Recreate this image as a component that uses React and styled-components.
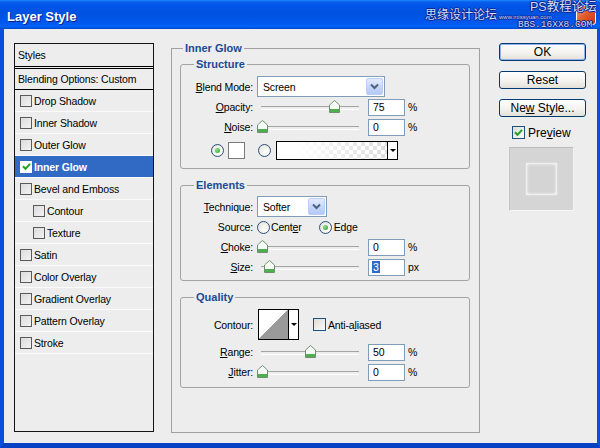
import React from "react";
import styled, { createGlobalStyle } from "styled-components";

const GlobalStyle = createGlobalStyle`
  html, body {
    margin: 0;
    padding: 0;
    background: #fff;
  }
  body {
    font-family: "Liberation Sans", Tahoma, Arial, sans-serif;
    font-size: 10.5px;
    letter-spacing: -0.15px;
    color: #000;
  }
  #root {
    width: 600px;
    height: 448px;
    overflow: hidden;
  }
  * {
    box-sizing: border-box;
  }
`;

const Window = styled.div`
  width: 600px;
  height: 448px;
  display: flex;
  flex-direction: column;
  background: #0a4fdc;
`;

const TitleBar = styled.div`
  position: relative;
  height: 29px;
  flex-shrink: 0;
  display: flex;
  align-items: center;
  padding: 3px 0 0 7px;
  background: linear-gradient(
    to bottom,
    #1a8cff 0,
    #0a5ded 2px,
    #0056e8 6px,
    #0052e0 45%,
    #0058ef 80%,
    #0062f8 92%,
    #0047c9 100%
  );
`;

const Title = styled.span`
  font-family: "Liberation Sans", Arial, sans-serif;
  font-weight: bold;
  font-size: 13px;
  letter-spacing: 0;
  color: #fff;
  text-shadow: 1px 1px 0 #0a1f8e;
`;

const CloseButton = styled.div`
  position: absolute;
  right: 4px;
  top: 5px;
  width: 20px;
  height: 20px;
  border-radius: 3px;
  border: 1px solid #fff;
  background: linear-gradient(135deg, #f0a080, #e2582c 50%, #c63a14);
`;

const Watermark = styled.span`
  position: absolute;
  left: ${(p) => p.$x}px;
  top: ${(p) => p.$y}px;
  font-family: ${(p) => (p.$mono ? '"Liberation Mono", monospace' : '"Liberation Sans", "Noto Sans CJK SC", sans-serif')};
  font-size: ${(p) => p.$size}px;
  letter-spacing: 0;
  line-height: 1;
  color: #d4ddff;
  white-space: nowrap;
  text-shadow: 0 0 1px #001060, 1px 0 0 #0a2a9a, -1px 0 0 #0a2a9a, 0 1px 0 #0a2a9a, 0 -1px 0 #0a2a9a;
`;

const Frame = styled.div`
  flex: 1;
  display: flex;
  align-items: flex-start;
  padding: 13px 0 0 10px;
  background: #ededed;
  border-left: 4px solid #0b4fe0;
  border-right: 3px solid #0b4fe0;
  border-bottom: 5px solid #0841c6;
`;

/* ---------- left style list ---------- */

const StylesPanel = styled.div`
  width: 140px;
  height: 389px;
  margin-top: 1px;
  border: 1px solid #141414;
  background: #ededed;
`;

const PanelHeader = styled.div`
  height: ${(p) => p.$h}px;
  display: flex;
  align-items: center;
  padding-left: 3px;
  border-bottom: ${(p) => (p.$double ? "3px double #000" : "1px solid #000")};
`;

const PanelRow = styled.div`
  height: 22px;
  display: flex;
  align-items: center;
  padding-left: ${(p) => (p.$indent ? 18 : 5)}px;
  border-bottom: 1px solid #fbfbfb;
  background: ${(p) => (p.$selected ? "#316ac5" : "transparent")};
  color: ${(p) => (p.$selected ? "#fff" : "#000")};
  font-weight: ${(p) => (p.$selected ? "bold" : "normal")};
`;

const ListBox = styled.span`
  width: 12px;
  height: 12px;
  margin-right: 2px;
  flex-shrink: 0;
  display: flex;
  align-items: center;
  justify-content: center;
  border: 1px solid ${(p) => (p.$checked ? "#fff" : "#5a5a5a")};
  background: ${(p) => (p.$checked ? "#fff" : "linear-gradient(135deg, #dcdcdc, #f2f2f2)")};
`;

/* ---------- group boxes ---------- */

const MainGroup = styled.fieldset`
  width: 309px;
  height: 391px;
  margin: 0 0 0 17px;
  padding: 0 9px 0 8px;
  border: 1px solid #a0a0a0;
  min-inline-size: auto;
`;

const Group = styled.fieldset`
  margin: ${(p) => p.$mt}px 0 0 0;
  padding: ${(p) => p.$pt}px 0 ${(p) => p.$pb}px 0;
  border: 1px solid #a3a3a3;
  border-radius: 3px;
  min-inline-size: auto;
`;

const Legend = styled.legend`
  margin-left: ${(p) => p.$ml}px;
  padding: 0 2px;
  font-weight: bold;
  font-size: 11px;
  letter-spacing: 0;
  line-height: 13px;
  color: #1b4a92;
`;

const Row = styled.div`
  display: flex;
  align-items: center;
  height: ${(p) => p.$h || 20}px;
  margin-top: ${(p) => p.$mt || 0}px;
  padding-left: ${(p) => p.$pl || 0}px;
`;

const Label = styled.span`
  width: 72px;
  flex-shrink: 0;
  text-align: right;
  white-space: nowrap;
`;

const U = styled.span`
  text-decoration: underline;
`;

const Select = styled.div`
  width: ${(p) => p.$w}px;
  height: 21px;
  margin-left: 4px;
  display: flex;
  align-items: center;
  justify-content: space-between;
  padding: 0 1px 0 5px;
  border: 1px solid #7f9db9;
  background: #fff;
`;

const SelectButton = styled.span`
  width: 17px;
  height: 17px;
  display: flex;
  align-items: center;
  justify-content: center;
  border: 1px solid #bccef8;
  border-radius: 2px;
  background: linear-gradient(to bottom, #e3ebfd, #c3d4f9 60%, #b4c8f6);
`;

const Slider = styled.div`
  position: relative;
  width: 106px;
  height: 14px;
  margin-left: 4px;
  flex-shrink: 0;

  &::before {
    content: "";
    position: absolute;
    left: 4px;
    right: 4px;
    top: 6px;
    height: 2px;
    border-top: 1px solid #a4a4a4;
    border-bottom: 1px solid #fff;
  }
`;

const ThumbWrap = styled.span`
  position: absolute;
  top: 0;
  width: 11px;
  height: 13px;
  display: block;
`;

const NumInput = styled.div`
  width: 37px;
  height: 17px;
  margin-left: 5px;
  display: flex;
  align-items: center;
  padding-left: 4px;
  border: 1px solid #7f9db9;
  background: #fff;
`;

const Highlight = styled.span`
  background: #316ac5;
  color: #fff;
  padding: 0 1px;
  margin-left: -1px;
`;

const Unit = styled.span`
  margin-left: 3px;
`;

const Radio = styled.span`
  width: 13px;
  height: 13px;
  flex-shrink: 0;
  margin-left: ${(p) => p.$ml || 0}px;
  border-radius: 50%;
  border: 1px solid #2a4f7a;
  background: radial-gradient(circle at 65% 65%, #fff, #e6e6e0 80%);
  display: flex;
  align-items: center;
  justify-content: center;

  &::after {
    content: "";
    display: ${(p) => (p.$checked ? "block" : "none")};
    width: 5px;
    height: 5px;
    border-radius: 50%;
    background: radial-gradient(circle at 35% 35%, #8de08d, #21a121);
  }
`;

const RadioText = styled.span`
  margin-left: ${(p) => p.$ml || 1}px;
`;

const Swatch = styled.span`
  width: 17px;
  height: 17px;
  margin-left: 4px;
  border: 1px solid #7a7a7a;
  background: #fff;
`;

const GradientPicker = styled.div`
  width: 122px;
  height: 19px;
  margin-left: 5px;
  display: flex;
  border: 1px solid #000;
`;

const GradientFill = styled.span`
  flex: 1;
  background: linear-gradient(to right, #fff 15%, rgba(255, 255, 255, 0.3) 100%),
    repeating-conic-gradient(#cfcfcf 0 25%, #fff 0 50%) 0 0 / 8px 8px;
`;

const PickerArrow = styled.span`
  width: 10px;
  flex-shrink: 0;
  display: flex;
  align-items: center;
  justify-content: center;
  border-left: 1px solid #000;
  background: #fff;

  &::after {
    content: "";
    border-left: 3px solid transparent;
    border-right: 3px solid transparent;
    border-top: 3px solid #000;
  }
`;

const ContourPicker = styled.div`
  width: 41px;
  height: 31px;
  margin-left: 5px;
  display: flex;
  border: 1px solid #000;
`;

const ContourFill = styled.span`
  flex: 1;
  background: linear-gradient(to bottom right, #fff 50%, #9a9a9a 50%);
`;

const CheckBox = styled.span`
  width: 13px;
  height: 13px;
  flex-shrink: 0;
  margin-left: ${(p) => p.$ml || 0}px;
  display: flex;
  align-items: center;
  justify-content: center;
  border: 1px solid #1c5180;
  background: linear-gradient(135deg, #dcdcd7, #fbfbfb);
`;

/* ---------- right column ---------- */

const RightColumn = styled.div`
  width: 87px;
  margin: 1px 0 0 19px;
  display: flex;
  flex-direction: column;
`;

const Button = styled.div`
  height: 18px;
  margin-bottom: 10px;
  display: flex;
  align-items: center;
  justify-content: center;
  border: 1px solid #003c74;
  border-radius: 3px;
  background: linear-gradient(to bottom, #fff, #f2f1ec 60%, #e3e0d6);
  box-shadow: ${(p) => (p.$default ? "inset 0 0 0 1px #8fb0ea" : "none")};
  font-size: 12px;
  letter-spacing: 0;
`;

const PreviewToggle = styled.div`
  display: flex;
  align-items: center;
  height: 13px;
  margin-top: -1px;
  padding-left: 13px;
  font-size: 12px;
  letter-spacing: 0;
`;

const PreviewBox = styled.div`
  width: 65px;
  height: 64px;
  margin: 8px 0 0 10px;
  display: flex;
  align-items: center;
  justify-content: center;
  background: #d5d5d5;
  border-top: 1px solid #bdbdbd;
  border-left: 1px solid #c4c4c4;
  border-bottom: 1px solid #f6f6f6;
  border-right: 1px solid #f3f3f3;
`;

const PreviewSquare = styled.div`
  width: 31px;
  height: 32px;
  background: #d4d4d4;
  border-radius: 1px;
  box-shadow: inset 0 0 3px 1px rgba(255, 255, 255, 0.95), 0 0 2px rgba(240, 240, 240, 0.9);
`;

/* ---------- drawings ---------- */

function Chevron() {
  return (
    <svg width="9" height="7" viewBox="0 0 9 7">
      <path d="M1 1.5 L4.5 5 L8 1.5" fill="none" stroke="#4d6185" strokeWidth="2" />
    </svg>
  );
}

function Check() {
  return (
    <svg width="9" height="9" viewBox="0 0 9 9">
      <path d="M1 4.2 L3.5 6.8 L8 1.8" fill="none" stroke="#21a121" strokeWidth="2" />
    </svg>
  );
}

function Thumb({ value }) {
  const left = (value / 100) * 96;
  return (
    <ThumbWrap style={{ left: `${left}px` }}>
      <svg width="11" height="13" viewBox="0 0 11 13">
        <path d="M0.5 5 L5.5 0.5 L10.5 5 V12.5 H0.5 Z" fill="#f6fbf6" stroke="#6e8f6e" />
        <rect x="1" y="9" width="9" height="3" fill="#4fae4f" />
        <path d="M1.5 5.3 L5.5 1.7" stroke="#fff" />
      </svg>
    </ThumbWrap>
  );
}

function SliderRow({ label, value, number, unit = "%", mt }) {
  return (
    <Row $mt={mt}>
      <Label>{label}</Label>
      <Slider>
        <Thumb value={value} />
      </Slider>
      <NumInput>{number}</NumInput>
      <Unit>{unit}</Unit>
    </Row>
  );
}

const styleItems = [
  { name: "Drop Shadow" },
  { name: "Inner Shadow" },
  { name: "Outer Glow" },
  { name: "Inner Glow", selected: true },
  { name: "Bevel and Emboss" },
  { name: "Contour", indent: true },
  { name: "Texture", indent: true },
  { name: "Satin" },
  { name: "Color Overlay" },
  { name: "Gradient Overlay" },
  { name: "Pattern Overlay" },
  { name: "Stroke" },
];

export default function App() {
  return (
    <>
      <GlobalStyle />
      <Window>
        <TitleBar>
          <Title>Layer Style</Title>
          <CloseButton />
          <Watermark $x={425} $y={9} $size={12}>思缘设计论坛</Watermark>
          <Watermark $x={499} $y={14} $size={6}>www.missyuan.com</Watermark>
          <Watermark $x={530} $y={1} $size={12.5}>PS教程论坛</Watermark>
          <Watermark $x={518} $y={20} $size={9.5} $mono>BBS.16XX8.COM</Watermark>
        </TitleBar>

        <Frame>
          <StylesPanel>
            <PanelHeader $h={25} $double>Styles</PanelHeader>
            <PanelHeader $h={21}>Blending Options: Custom</PanelHeader>
            {styleItems.map((item) => (
              <PanelRow key={item.name} $indent={item.indent} $selected={item.selected}>
                <ListBox $checked={item.selected}>{item.selected && <Check />}</ListBox>
                {item.name}
              </PanelRow>
            ))}
          </StylesPanel>

          <MainGroup>
            <Legend $ml={3}>Inner Glow</Legend>

            <Group $mt={3} $pt={5} $pb={8}>
              <Legend $ml={13}>Structure</Legend>
              <Row $h={21}>
                <Label>
                  <U>B</U>lend Mode:
                </Label>
                <Select $w={128}>
                  Screen
                  <SelectButton>
                    <Chevron />
                  </SelectButton>
                </Select>
              </Row>
              <SliderRow
                label={<><U>O</U>pacity:</>}
                value={75}
                number="75"
              />
              <SliderRow label={<><U>N</U>oise:</>} value={0} number="0" />
              <Row $mt={3} $pl={30}>
                <Radio $checked />
                <Swatch />
                <Radio $ml={13} />
                <GradientPicker>
                  <GradientFill />
                  <PickerArrow />
                </GradientPicker>
              </Row>
            </Group>

            <Group $mt={10} $pt={4} $pb={3}>
              <Legend $ml={13}>Elements</Legend>
              <Row $h={21}>
                <Label>
                  <U>T</U>echnique:
                </Label>
                <Select $w={70}>
                  Softer
                  <SelectButton>
                    <Chevron />
                  </SelectButton>
                </Select>
              </Row>
              <Row>
                <Label>Source:</Label>
                <Radio $ml={4} />
                <RadioText>
                  Cent<U>e</U>r
                </RadioText>
                <Radio $ml={17} $checked />
                <RadioText $ml={2}>
                  Ed<U>g</U>e
                </RadioText>
              </Row>
              <SliderRow label={<><U>C</U>hoke:</>} value={0} number="0" />
              <SliderRow
                label={<><U>S</U>ize:</>}
                value={7}
                number={<Highlight>3</Highlight>}
                unit="px"
              />
            </Group>

            <Group $mt={10} $pt={5} $pb={5}>
              <Legend $ml={13}>Quality</Legend>
              <Row $h={31}>
                <Label>Contour:</Label>
                <ContourPicker>
                  <ContourFill />
                  <PickerArrow />
                </ContourPicker>
                <CheckBox $ml={14} />
                <RadioText $ml={2}>
                  Anti-a<U>l</U>iased
                </RadioText>
              </Row>
              <SliderRow mt={2} label={<><U>R</U>ange:</>} value={50} number="50" />
              <SliderRow label={<><U>J</U>itter:</>} value={0} number="0" />
            </Group>
          </MainGroup>

          <RightColumn>
            <Button $default>OK</Button>
            <Button>Reset</Button>
            <Button>
              Ne<U>w</U>&nbsp;Style...
            </Button>
            <PreviewToggle>
              <CheckBox>
                <Check />
              </CheckBox>
              <RadioText $ml={3}>
                Pre<U>v</U>iew
              </RadioText>
            </PreviewToggle>
            <PreviewBox>
              <PreviewSquare />
            </PreviewBox>
          </RightColumn>
        </Frame>
      </Window>
    </>
  );
}
